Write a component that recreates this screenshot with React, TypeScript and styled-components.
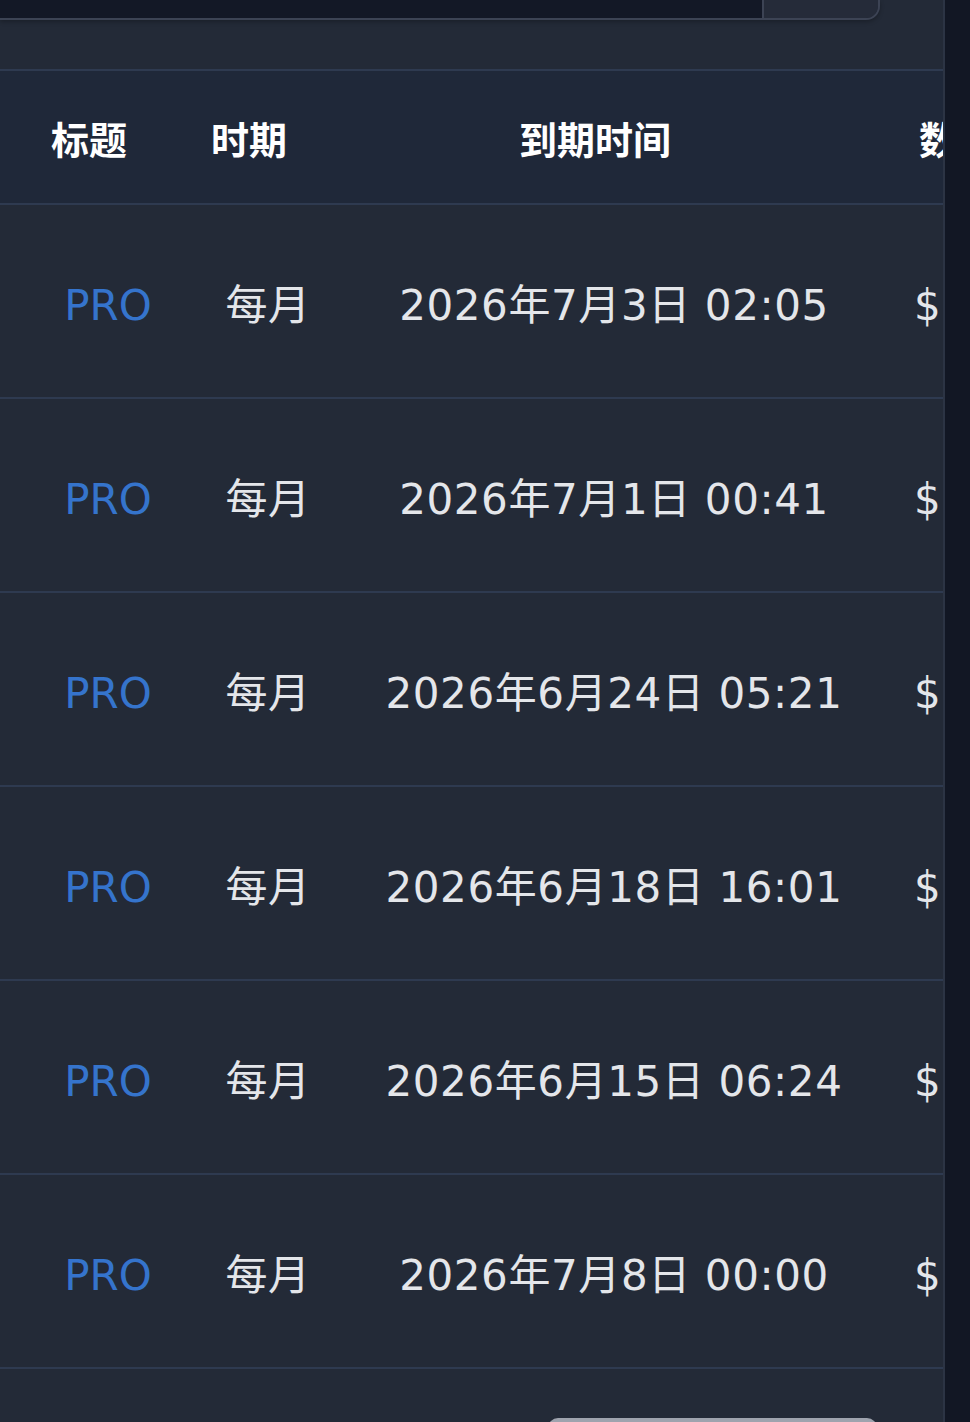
import React from "react";
import styled, { createGlobalStyle } from "styled-components";

const GlobalStyle = createGlobalStyle`
  html, body {
    margin: 0;
    padding: 0;
    background: #121724;
    overflow: hidden;
  }
  * { box-sizing: border-box; }
`;

const Page = styled.div`
  display: flex;
  width: 970px;
  height: 1422px;
  background: #121724;
`;

const Panel = styled.main`
  width: 945px;
  height: 1422px;
  background: #232a37;
  border-right: 2px solid #2c3444;
  overflow: hidden;
  display: flex;
  flex-direction: column;
`;

const SearchGroup = styled.div`
  display: flex;
  width: 880px;
  height: 20px;
  flex-shrink: 0;
  border-bottom: 2px solid #3c4354;
  border-right: 2px solid #3c4354;
  border-bottom-right-radius: 14px;
  overflow: hidden;
  box-shadow: 0 2px 4px rgba(0, 0, 0, 0.25);
`;

const SearchInput = styled.div`
  flex: 1;
  background: #131826;
  border-right: 2px solid #3c4354;
`;

const SearchAddon = styled.div`
  width: 114px;
  background: #252b39;
`;

const Table = styled.div`
  margin-top: 49px;
  display: grid;
  grid-template-columns: 216px 104px 588px 300px;
  width: 1208px;
  flex-shrink: 0;
`;

const HeadRow = styled.div`
  display: contents;
`;

const Row = styled.div`
  display: contents;
`;

const HeadCell = styled.div<{ $start?: boolean }>`
  height: 136px;
  min-width: 0;
  background: #1f2839;
  border-top: 2px solid #2e3a50;
  border-bottom: 2px solid #2e3a50;
  display: flex;
  align-items: center;
  justify-content: ${(p) => (p.$start ? "flex-start" : "center")};
  padding: ${(p) => (p.$start ? "2px 0 0 11px" : "2px 38px 0 0")};
  font-family: "Noto Sans CJK SC", "Noto Sans", sans-serif;
  font-weight: 700;
  font-size: 38px;
  color: #ffffff;
  white-space: nowrap;
  line-height: 1.2;
`;

const Cell = styled.div<{ $start?: boolean; $accent?: boolean }>`
  height: 194px;
  min-width: 0;
  border-bottom: 2px solid #2e3a50;
  display: flex;
  align-items: center;
  justify-content: ${(p) => (p.$start ? "flex-start" : "center")};
  padding: ${(p) => (p.$start ? "10px 0 0 6px" : "10px 0 0 0")};
  font-family: "DejaVu Sans", "Noto Sans CJK SC", sans-serif;
  font-size: 42px;
  letter-spacing: ${(p) => (p.$accent ? "0" : "0.6px")};
  color: ${(p) => (p.$accent ? "#3574cc" : "#e4e6ea")};
  white-space: nowrap;
  line-height: 1.2;
`;

const Footer = styled.div`
  display: flex;
  justify-content: flex-end;
  padding: 49px 66px 0 0;
`;

const FooterButton = styled.div`
  width: 329px;
  height: 50px;
  background: #9ea3ae;
  border-radius: 10px;
  flex-shrink: 0;
`;

const rows = [
  { title: "PRO", period: "每月", expires: "2026年7月3日 02:05", amount: "$9.99" },
  { title: "PRO", period: "每月", expires: "2026年7月1日 00:41", amount: "$9.99" },
  { title: "PRO", period: "每月", expires: "2026年6月24日 05:21", amount: "$9.99" },
  { title: "PRO", period: "每月", expires: "2026年6月18日 16:01", amount: "$9.99" },
  { title: "PRO", period: "每月", expires: "2026年6月15日 06:24", amount: "$9.99" },
  { title: "PRO", period: "每月", expires: "2026年7月8日 00:00", amount: "$9.99" },
];

export default function App() {
  return (
    <>
      <GlobalStyle />
      <Page>
        <Panel>
          <SearchGroup>
            <SearchInput />
            <SearchAddon />
          </SearchGroup>
          <Table>
            <HeadRow>
              <HeadCell>标题</HeadCell>
              <HeadCell>时期</HeadCell>
              <HeadCell>到期时间</HeadCell>
              <HeadCell $start>数量</HeadCell>
            </HeadRow>
            {rows.map((r, i) => (
              <Row key={i}>
                <Cell $accent>{r.title}</Cell>
                <Cell>{r.period}</Cell>
                <Cell>{r.expires}</Cell>
                <Cell $start>{r.amount}</Cell>
              </Row>
            ))}
          </Table>
          <Footer>
            <FooterButton />
          </Footer>
        </Panel>
      </Page>
    </>
  );
}
